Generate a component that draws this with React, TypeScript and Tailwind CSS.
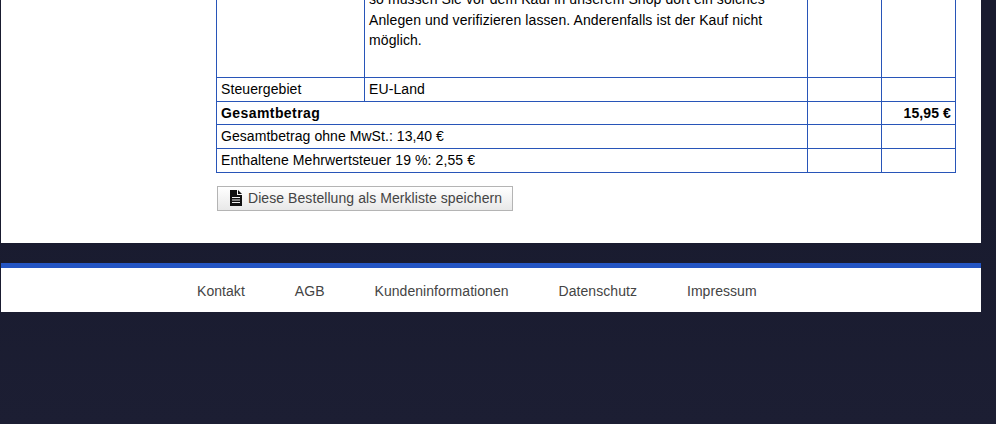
const cell = 'border border-[#2855b8] px-1 align-middle';

function FileIcon() {
  return (
    <svg width="12" height="16" viewBox="0 0 12 16" className="shrink-0" aria-hidden="true">
      <path
        fill="#111"
        fillRule="evenodd"
        d="M0 0h7v5h5v11H0V0zm8 0l4 4H8V0zM2 7v1h8V7H2zm0 2.5v1h8v-1H2zM2 12v1h8v-1H2z"
      />
    </svg>
  );
}

export default function App() {
  const footerLinks = ['Kontakt', 'AGB', 'Kundeninformationen', 'Datenschutz', 'Impressum'];

  return (
    <div className="h-[424px] w-[996px] overflow-hidden bg-gradient-to-b from-[#191b2f] via-[#191b2f] to-[#1c1e33] font-['Liberation_Sans',Arial,sans-serif] text-[14px] tracking-[0.09px] text-black">
      <main className="ml-px h-[243px] w-[980px] overflow-hidden bg-white pl-[215px]">
        <table className="mt-[-12px] w-[739px] table-fixed border-collapse">
          <colgroup>
            <col className="w-[148px]" />
            <col className="w-[443px]" />
            <col className="w-[74px]" />
            <col className="w-[74px]" />
          </colgroup>
          <tbody>
            <tr className="h-[85px]">
              <td className={cell}></td>
              <td className={`${cell} align-top leading-[20.5px]`}>
                <div className="pb-[26px] whitespace-nowrap">
                  so müssen Sie vor dem Kauf in unserem Shop dort ein solches
                  <br />
                  Anlegen und verifizieren lassen. Anderenfalls ist der Kauf nicht
                  <br />
                  möglich.
                </div>
              </td>
              <td className={cell}></td>
              <td className={cell}></td>
            </tr>
            <tr className="h-[24px]">
              <td className={cell}>Steuergebiet</td>
              <td className={cell}>EU-Land</td>
              <td className={cell}></td>
              <td className={cell}></td>
            </tr>
            <tr className="h-[23px] font-bold">
              <td className={`${cell} pt-px tracking-[0.42px]`} colSpan={2}>Gesamtbetrag</td>
              <td className={cell}></td>
              <td className={`${cell} pt-px text-right tracking-[0.1px]`}>15,95 €</td>
            </tr>
            <tr className="h-[24px]">
              <td className={`${cell} tracking-[0.06px]`} colSpan={2}>Gesamtbetrag ohne MwSt.: 13,40 €</td>
              <td className={cell}></td>
              <td className={cell}></td>
            </tr>
            <tr className="h-[24px]">
              <td className={cell} colSpan={2}>Enthaltene Mehrwertsteuer 19 %: 2,55 €</td>
              <td className={cell}></td>
              <td className={cell}></td>
            </tr>
          </tbody>
        </table>
        <button
          type="button"
          className="mt-[13px] ml-px flex h-[25px] w-[296px] items-center gap-[6px] border border-[#b4b4b4] bg-gradient-to-b from-white to-[#e8e8e8] pl-[12px] text-[14px] tracking-[0.07px] text-[#444]"
        >
          <FileIcon />
          Diese Bestellung als Merkliste speichern
        </button>
      </main>

      <footer className="mt-5 ml-px h-[49px] w-[980px] border-t-[5px] border-[#2455c3] bg-white">
        <nav className="flex h-[44px] items-center gap-[50px] pt-[2px] pl-[196px] tracking-[0.05px] text-[#444]">
          {footerLinks.map((link) => (
            <a key={link} href="#">
              {link}
            </a>
          ))}
        </nav>
      </footer>
    </div>
  );
}
